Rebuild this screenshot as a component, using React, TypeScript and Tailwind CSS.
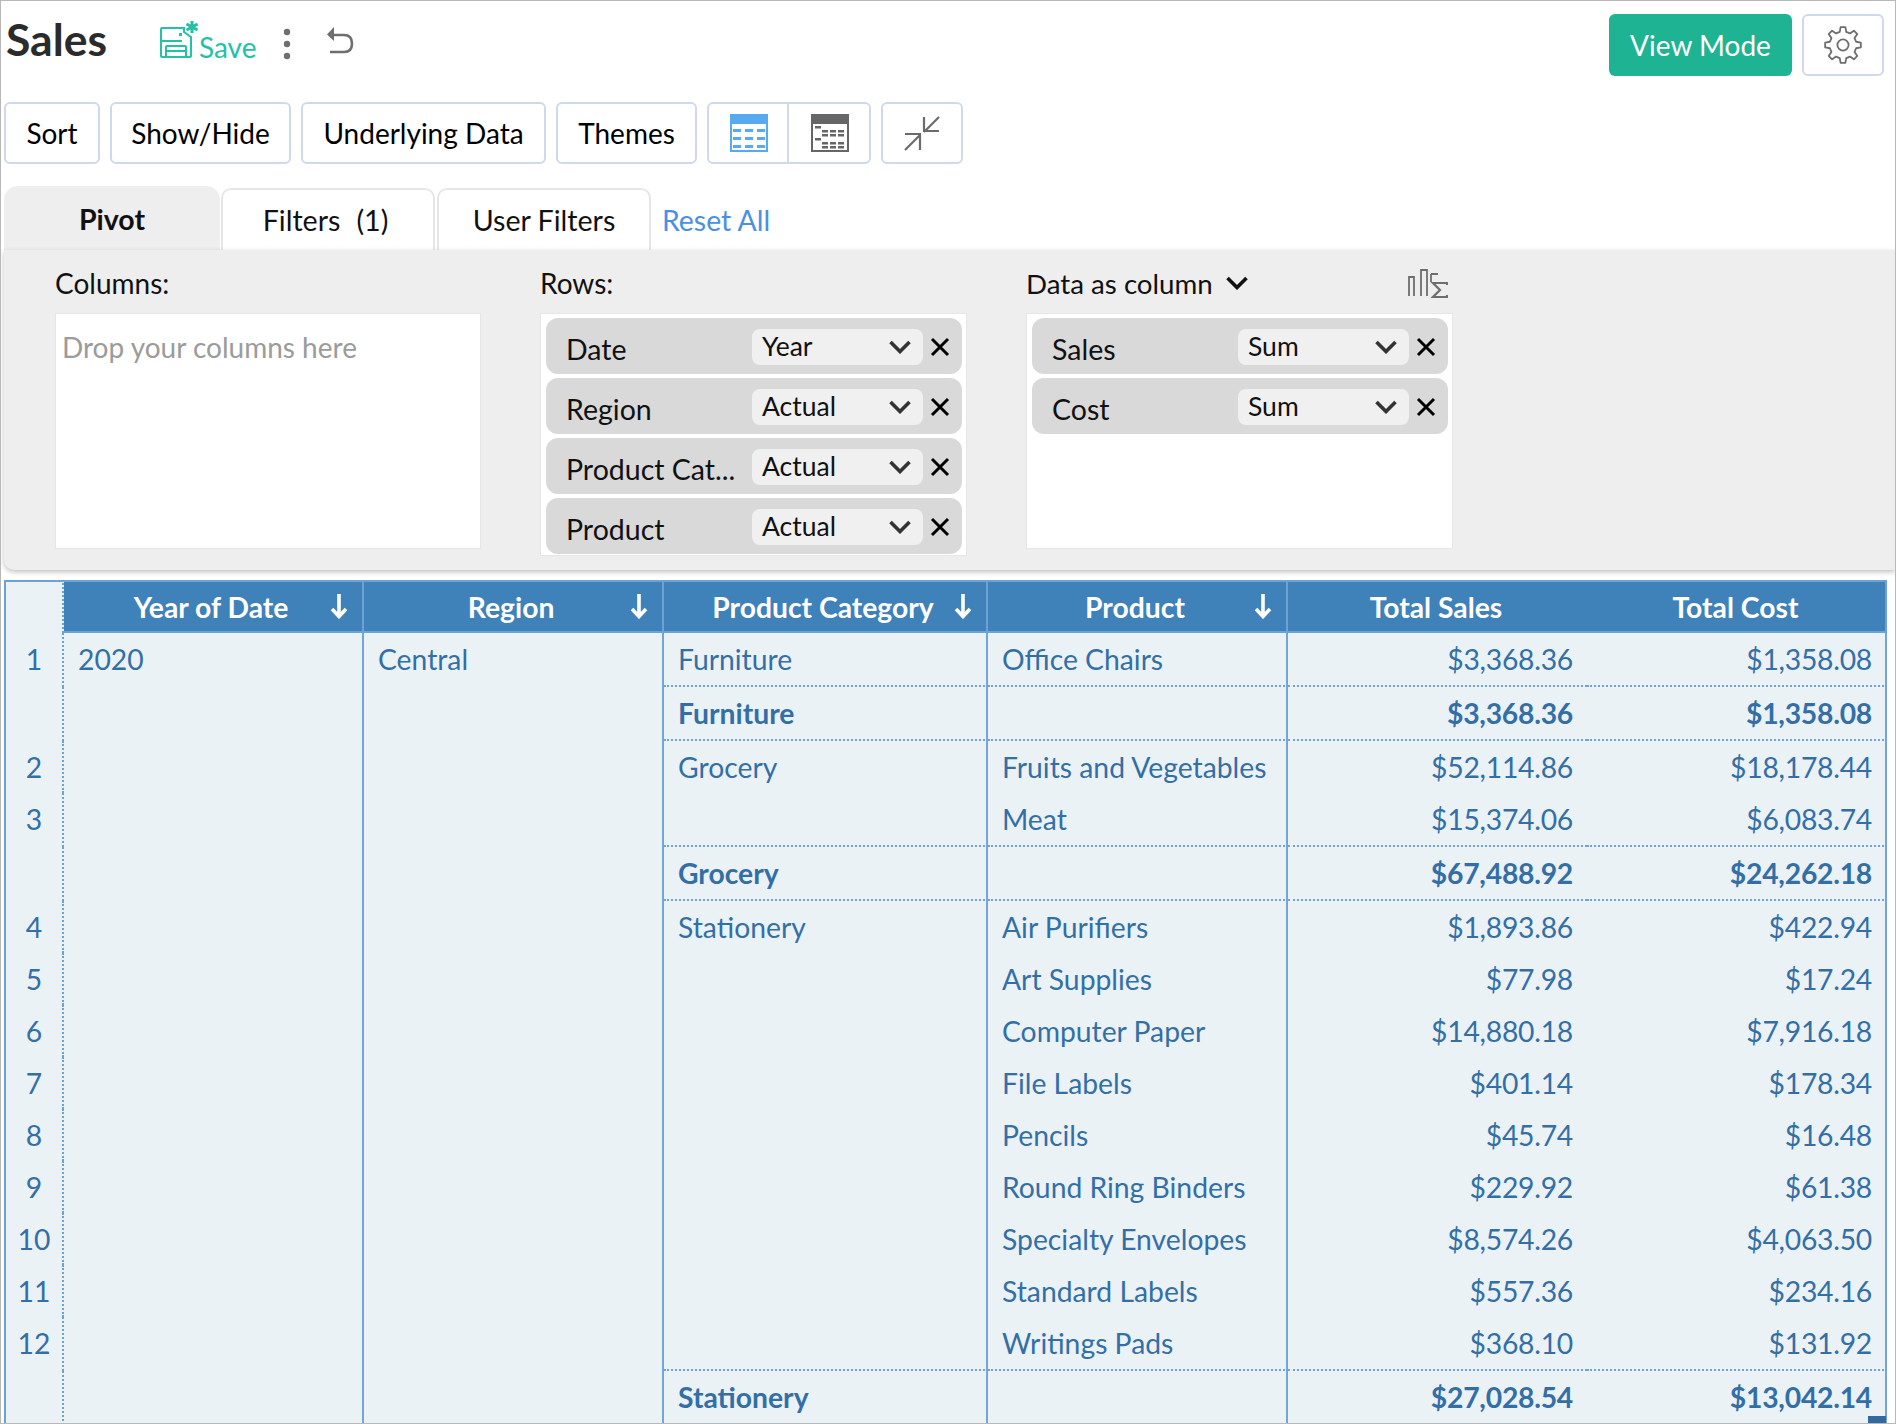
import React from "react";

const ChevronDown = ({ cls }: { cls: string }) => (
  <svg viewBox="0 0 22 14" className={cls} fill="none" stroke="currentColor" strokeWidth="3.6">
    <path d="M1.5 2 L11 11.5 L20.5 2" />
  </svg>
);

const Close = () => (
  <svg viewBox="0 0 20 20" className="w-[20px] h-[20px] text-black" fill="none" stroke="currentColor" strokeWidth="3">
    <path d="M2 2 L18 18 M18 2 L2 18" />
  </svg>
);

const ArrowDown = () => (
  <svg viewBox="0 0 18 26" className="w-[18px] h-[26px] text-white" fill="none" stroke="currentColor" strokeWidth="3.6">
    <path d="M9 1 V23 M2 16 L9 23.5 L16 16" />
  </svg>
);

function gearPath() {
  const pts: string[] = [];
  const n = 8;
  for (let i = 0; i < n; i++) {
    const a = (i * 2 * Math.PI) / n - Math.PI / 2;
    const w = Math.PI / n;
    const add = (r: number, da: number) =>
      pts.push(`${(19 + r * Math.cos(a + da)).toFixed(2)} ${(19 + r * Math.sin(a + da)).toFixed(2)}`);
    add(13.5, -w * 0.62);
    add(18, -w * 0.34);
    add(18, w * 0.34);
    add(13.5, w * 0.62);
  }
  return "M" + pts.join(" L") + " Z";
}

const Gear = () => (
  <svg viewBox="0 0 38 38" className="w-[38px] h-[38px] text-[#6e6e6e]" fill="none" stroke="currentColor" strokeWidth="1.8" strokeLinejoin="round">
    <path d={gearPath()} />
    <circle cx="19" cy="19" r="5.6" />
  </svg>
);

const SaveIcon = () => (
  <svg viewBox="0 0 38 38" className="w-[38px] h-[38px] text-[#22c2a5]" fill="none" stroke="currentColor" strokeWidth="2">
    <path d="M1 9 Q1 8 2 8 H24 V12 L31 17 V36 Q31 37 30 37 H2 Q1 37 1 36 Z" />
    <path d="M1 21 H22 M7 26 H25 Q26 26 26 27 V36 M7 26 Q6 26 6 27 V36 M6 31 H26" />
    <path d="M19 13 H22 V16 H19 Z" fill="currentColor" stroke="none" />
    <path d="M32 1 V13 M26.5 4 L37.5 10 M37.5 4 L26.5 10" strokeWidth="3" />
  </svg>
);

const Dots = () => (
  <svg viewBox="0 0 8 32" className="w-[8px] h-[32px] text-[#6e6e6e]" fill="currentColor">
    <circle cx="4" cy="4" r="3.2" />
    <circle cx="4" cy="16" r="3.2" />
    <circle cx="4" cy="28" r="3.2" />
  </svg>
);

const Undo = () => (
  <svg viewBox="0 0 28 30" className="w-[28px] h-[30px] text-[#6e6e6e]" fill="none" stroke="currentColor" strokeWidth="2.6">
    <path d="M6 9 H18 Q26 9 26 17.5 Q26 26 18 26 H4" />
    <path d="M8 1 V15 L1 8.5 Z" fill="currentColor" stroke="none" />
  </svg>
);

const GridIcon = ({ main, cls }: { main: string; cls: string }) => (
  <svg viewBox="0 0 38 38" className={cls}>
    <rect x="1" y="1" width="36" height="36" fill="none" stroke={main} strokeWidth="2" />
    <rect x="0" y="0" width="38" height="10" fill={main} />
    {[15, 23, 31].map((y) =>
      [3, 15, 27].map((x) => <rect key={`${x}-${y}`} x={x} y={y} width="8" height="3" fill={main} />)
    )}
  </svg>
);

const PivotIcon = ({ main, cls }: { main: string; cls: string }) => (
  <svg viewBox="0 0 38 38" className={cls}>
    <rect x="1" y="1" width="36" height="36" fill="none" stroke={main} strokeWidth="2" />
    <rect x="0" y="0" width="38" height="10" fill={main} />
    <rect x="4" y="12" width="6" height="2.5" fill={main} />
    <rect x="4" y="24" width="6" height="2.5" fill={main} />
    {[16, 20, 28, 32].map((y) =>
      [11, 19, 27].map((x) => <rect key={`${x}-${y}`} x={x} y={y} width="6" height="2.5" fill={main} />)
    )}
  </svg>
);

const Compress = () => (
  <svg viewBox="0 0 36 36" className="w-[36px] h-[36px] text-[#6b6b6b]" fill="none" stroke="currentColor" strokeWidth="2.2">
    <path d="M35 2 L20 17 M20 2 V16 H35" />
    <path d="M1 35 L16 20 M1 19 H16 V35" />
  </svg>
);

const SumBars = () => (
  <svg viewBox="0 0 40 30" className="w-[40px] h-[30px] text-[#6e6e6e]" fill="none" stroke="currentColor" strokeWidth="1.8">
    <path d="M1 27 V8 H6 V27 M13 27 V1 H19 V27" />
    <path d="M23 5 H30 M23 5 V13" />
    <path d="M39 16 V14 H25 L32 21 L25 28 H39 V26" strokeWidth="2.2" />
  </svg>
);

const btn =
  "h-[62px] rounded-[6px] border-2 border-[#cfd9ec] bg-white flex items-center justify-center text-[28px] text-black";

const Pill = ({ label, value }: { label: string; value: string }) => (
  <div className="h-[56px] shrink-0 rounded-[12px] bg-[#d9d9d9] flex items-start pl-[20px] pr-[9px] pt-[11px]">
    <span className="-mt-[2px] w-[186px] text-[28.5px] leading-[44px] text-[#111] shrink-0 whitespace-nowrap">{label}</span>
    <div className="w-[171px] h-[36px] rounded-[8px] bg-[#f0f0f0] flex items-center justify-between pl-[10px] pr-[12px] text-[26.5px] text-[#111] shrink-0">
      <span>{value}</span>
      <ChevronDown cls="w-[22px] h-[14px] text-[#333]" />
    </div>
    <div className="w-[34px] h-[36px] flex items-center justify-center shrink-0">
      <Close />
    </div>
  </div>
);

type Row = {
  idx?: string;
  cat?: string;
  span?: number;
  product?: string;
  sales: string;
  cost: string;
  total?: boolean;
  line?: boolean;
};

const rows: Row[] = [
  { idx: "1", cat: "Furniture", span: 1, product: "Office Chairs", sales: "$3,368.36", cost: "$1,358.08", line: true },
  { cat: "Furniture", span: 1, sales: "$3,368.36", cost: "$1,358.08", total: true, line: true },
  { idx: "2", cat: "Grocery", span: 2, product: "Fruits and Vegetables", sales: "$52,114.86", cost: "$18,178.44" },
  { idx: "3", product: "Meat", sales: "$15,374.06", cost: "$6,083.74", line: true },
  { cat: "Grocery", span: 1, sales: "$67,488.92", cost: "$24,262.18", total: true, line: true },
  { idx: "4", cat: "Stationery", span: 9, product: "Air Purifiers", sales: "$1,893.86", cost: "$422.94" },
  { idx: "5", product: "Art Supplies", sales: "$77.98", cost: "$17.24" },
  { idx: "6", product: "Computer Paper", sales: "$14,880.18", cost: "$7,916.18" },
  { idx: "7", product: "File Labels", sales: "$401.14", cost: "$178.34" },
  { idx: "8", product: "Pencils", sales: "$45.74", cost: "$16.48" },
  { idx: "9", product: "Round Ring Binders", sales: "$229.92", cost: "$61.38" },
  { idx: "10", product: "Specialty Envelopes", sales: "$8,574.26", cost: "$4,063.50" },
  { idx: "11", product: "Standard Labels", sales: "$557.36", cost: "$234.16" },
  { idx: "12", product: "Writings Pads", sales: "$368.10", cost: "$131.92", line: true },
  { cat: "Stationery", span: 1, sales: "$27,028.54", cost: "$13,042.14", total: true, line: true },
];

const solid = "border-r-2 border-r-[#71a6d6]";
const dotted = "border-b-2 border-b-[#6ea5d6] [border-bottom-style:dotted]";

const Head = ({ text, arrow, extra }: { text: string; arrow?: boolean; extra?: string }) => (
  <th className={`relative h-[53px] bg-[#3f81b9] border-t-2 border-b-2 border-[#6ba3d4] pt-[2px] pb-0 pl-0 text-center text-[28.3px] font-bold text-white align-middle ${extra ?? ""}`}>
    {text}
    {arrow && (
      <span className="absolute right-[14px] top-[11px]">
        <ArrowDown />
      </span>
    )}
  </th>
);

export default function App() {
  return (
    <div className="relative w-[1896px] h-[1424px] overflow-hidden bg-white border border-[#b8b8b8] font-[Lato,sans-serif] flex flex-col">
      <div className="h-[101px] shrink-0 flex items-start pl-[5px] pr-[11px]">
        <h1 className="mt-[12px] w-[154px] text-[44.5px] leading-[52px] font-bold text-[#2b2b2b]">Sales</h1>
        <div className="mt-[19px] flex items-end">
          <SaveIcon />
          <span className="ml-[1px] -mb-[7px] text-[28px] leading-[36px] text-[#22c2a5]">Save</span>
        </div>
        <div className="mt-[27px] ml-[27px]">
          <Dots />
        </div>
        <div className="mt-[25px] ml-[35px]">
          <Undo />
        </div>
        <div className="ml-auto mt-[13px] flex gap-[10px]">
          <div className="w-[183px] h-[62px] rounded-[6px] bg-[#1eb392] flex items-center justify-center text-[28px] text-white">
            View Mode
          </div>
          <div className={`${btn} w-[82px]`}>
            <Gear />
          </div>
        </div>
      </div>

      <div className="h-[62px] shrink-0 flex gap-[10px] pl-[3px]">
        <div className={`${btn} w-[96px]`}>Sort</div>
        <div className={`${btn} w-[181px]`}>Show/Hide</div>
        <div className={`${btn} w-[245px]`}>Underlying Data</div>
        <div className={`${btn} w-[141px]`}>Themes</div>
        <div className="flex h-[62px] w-[164px] rounded-[6px] border-2 border-[#cfd9ec]">
          <div className="w-[80px] border-r-2 border-[#cfd9ec] pl-[1px] flex items-center justify-center">
            <GridIcon main="#58aaf0" cls="w-[38px] h-[38px]" />
          </div>
          <div className="flex-1 pl-[2px] flex items-center justify-center">
            <PivotIcon main="#666666" cls="w-[38px] h-[38px]" />
          </div>
        </div>
        <div className={`${btn} w-[82px]`}>
          <Compress />
        </div>
      </div>

      <div className="mt-[22px] h-[64px] shrink-0 flex items-end pl-[3px]">
        <div className="w-[216px] h-[64px] rounded-t-[14px] bg-[#eeeeee] flex items-center justify-center text-[28.5px] font-bold text-[#111] pt-[2px]">
          Pivot
        </div>
        <div className="ml-[1px] w-[214px] h-[62px] rounded-t-[10px] border-2 border-b-0 border-[#e6e6e6] flex items-center justify-center gap-[16px] text-[28.6px] text-[#111] pr-[5px]">
          <span>Filters</span>
          <span>(1)</span>
        </div>
        <div className="ml-[2px] w-[214px] h-[62px] rounded-t-[10px] border-2 border-b-0 border-[#e6e6e6] flex items-center justify-center text-[28.6px] text-[#111]">
          User Filters
        </div>
        <span className="ml-[11px] mb-[5px] text-[28.4px] leading-[50px] text-[#4a90e2]">Reset All</span>
      </div>

      <div className="ml-[3px] h-[320px] shrink-0 bg-[#eeeeee] rounded-bl-[10px] shadow-[0_2px_5px_rgba(0,0,0,0.25)] flex items-start pt-[16px] pl-[51px]">
        <div className="w-[485px] shrink-0">
          <div className="h-[47px] text-[28px] leading-[35px] text-[#111]">Columns:</div>
          <div className="w-[426px] h-[236px] bg-white border border-[#e6e6e6] pl-[6px] pt-[14px] text-[28px] leading-[38px] text-[#9b9b9b]">
            Drop your columns here
          </div>
        </div>
        <div className="w-[486px] shrink-0">
          <div className="h-[47px] text-[28px] leading-[35px] text-[#111]">Rows:</div>
          <div className="w-[427px] h-[243px] bg-white border border-[#e6e6e6] pl-[5px] pr-[4px] pt-[4px] pb-[1px] flex flex-col gap-[4px]">
            <Pill label="Date" value="Year" />
            <Pill label="Region" value="Actual" />
            <Pill label="Product Cat..." value="Actual" />
            <Pill label="Product" value="Actual" />
          </div>
        </div>
        <div className="w-[427px] shrink-0">
          <div className="h-[47px] flex items-start relative">
            <span className="text-[27.7px] leading-[35px] text-[#111]">Data as column</span>
            <ChevronDown cls="ml-[13px] mt-[10px] w-[22px] h-[14px] text-[#111]" />
            <span className="ml-auto mr-[5px] mt-[3px]">
              <SumBars />
            </span>
          </div>
          <div className="w-[427px] h-[236px] bg-white border border-[#e6e6e6] pl-[5px] pr-[4px] py-[4px] flex flex-col gap-[4px]">
            <Pill label="Sales" value="Sum" />
            <Pill label="Cost" value="Sum" />
          </div>
        </div>
      </div>

      <div className="mt-[10px] flex-1 min-h-0 overflow-hidden pl-[3px]">
        <table className="table-fixed w-[1883px] border-separate border-spacing-0 text-[28.3px] text-[#336fa6]">
          <colgroup>
            <col className="w-[60px]" />
            <col className="w-[300px]" />
            <col className="w-[300px]" />
            <col className="w-[324px]" />
            <col className="w-[300px]" />
            <col className="w-[299px]" />
            <col className="w-[300px]" />
          </colgroup>
          <thead>
            <tr>
              <th className="bg-[#ebf2f6] border-l-2 border-t-2 border-[#6ba3d4] border-r-2 border-r-[#6ba3d4] [border-right-style:dotted] p-0" />
              <Head text="Year of Date" arrow extra="border-r-2 pr-[4px]" />
              <Head text="Region" arrow extra="border-r-2 pr-[4px]" />
              <Head text="Product Category" arrow extra="border-r-2 pr-[4px]" />
              <Head text="Product" arrow extra="border-r-2 pr-[4px]" />
              <Head text="Total Sales" extra="pr-[3px]" />
              <Head text="Total Cost" extra="border-r-2 pr-[1px]" />
            </tr>
          </thead>
          <tbody className="bg-[#ebf2f6]">
            {rows.map((r, i) => {
              const line = r.line ? dotted : "";
              const weight = r.total ? "font-bold" : "";
              const h = `${r.line ? "h-[54px]" : "h-[52px]"} leading-[50px] pt-[1px] pb-[1px] align-top`;
              const num = `${h} text-right tracking-[-0.25px] ${weight} ${line}`;
              return (
                <tr key={i}>
                  <td className={`${h} text-center border-l-2 border-l-[#6ba3d4] border-r-2 border-r-[#6ba3d4] [border-right-style:dotted]`}>{r.idx}</td>
                  {i === 0 && (
                    <td rowSpan={rows.length} className={`${h} pl-[14px] ${solid}`}>2020</td>
                  )}
                  {i === 0 && (
                    <td rowSpan={rows.length} className={`${h} pl-[14px] ${solid}`}>Central</td>
                  )}
                  {r.cat && (
                    <td rowSpan={r.span} className={`${h} pl-[14px] ${solid} ${dotted} ${weight}`}>{r.cat}</td>
                  )}
                  <td className={`${h} pl-[14px] whitespace-nowrap ${solid} ${line}`}>{r.product}</td>
                  <td className={`${num} pr-[14px]`}>{r.sales}</td>
                  <td className={`${num} pr-[13px] ${solid}`}>{r.cost}</td>
                </tr>
              );
            })}
          </tbody>
        </table>
      </div>
      <div className="absolute left-[1867px] top-[1415px] w-[18px] h-[8px] bg-[#33699f]" />
    </div>
  );
}
